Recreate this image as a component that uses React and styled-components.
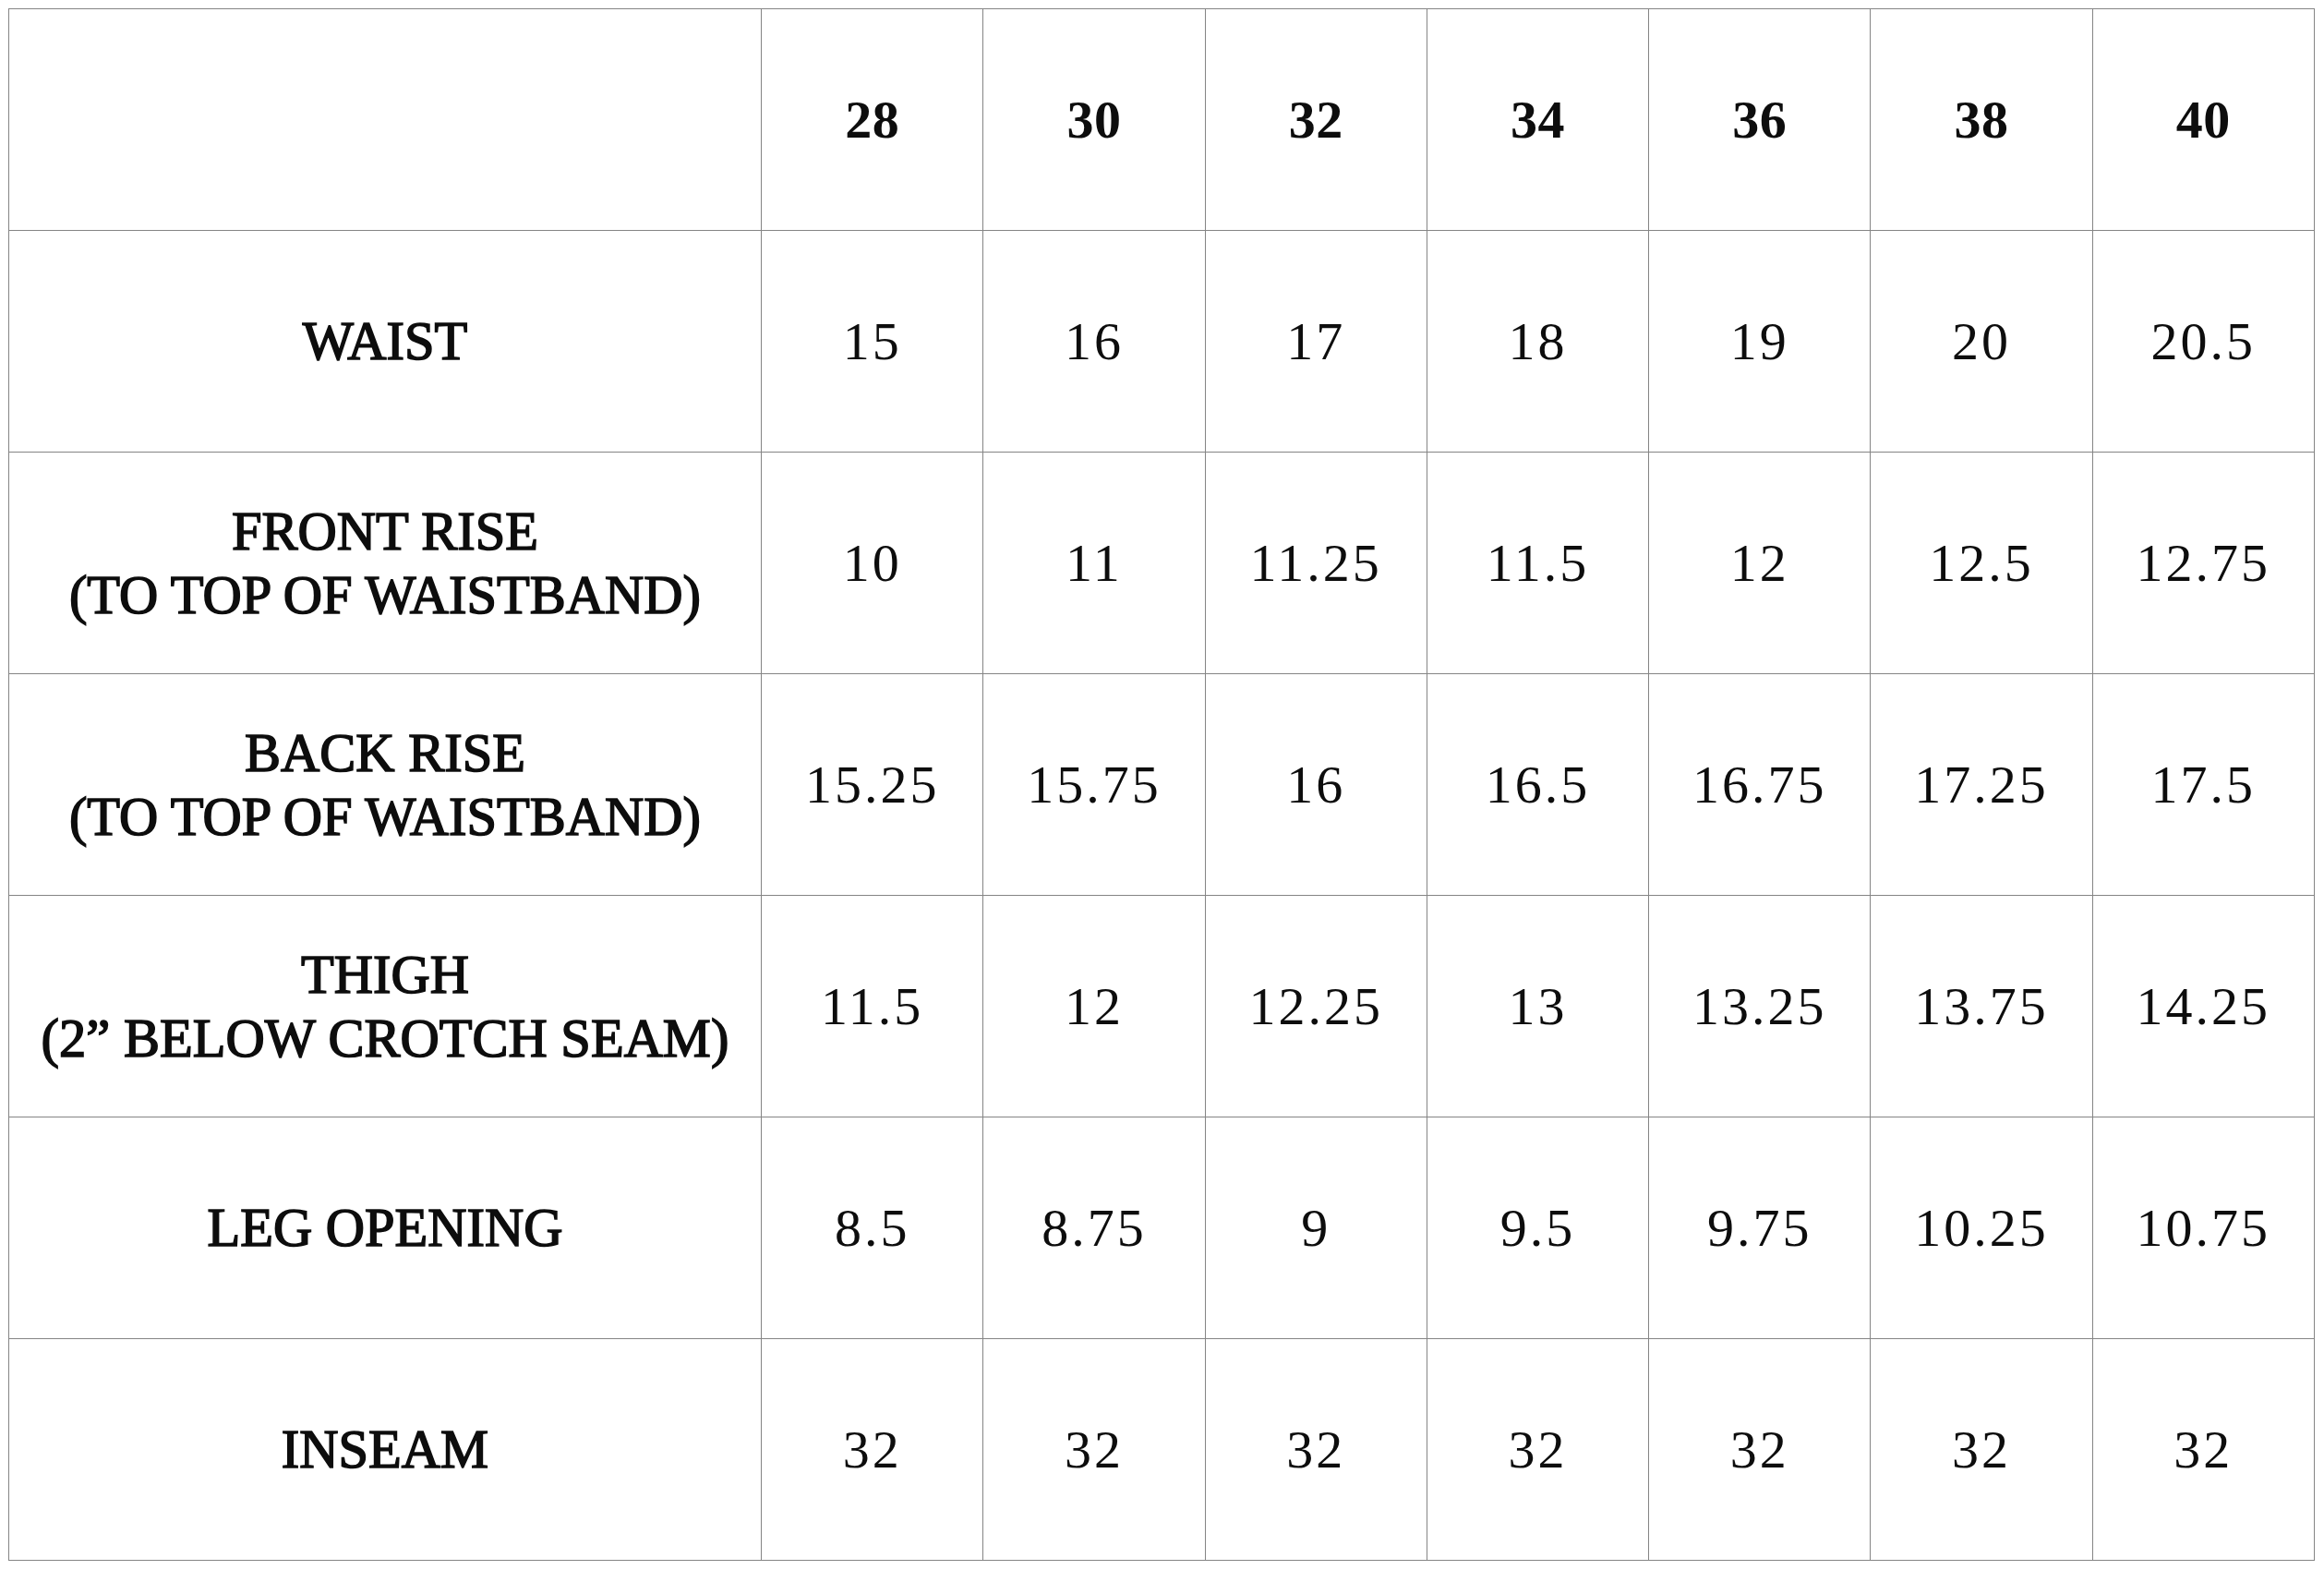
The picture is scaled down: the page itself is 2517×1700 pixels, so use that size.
import React from "react";
import styled, { createGlobalStyle } from "styled-components";

const GlobalStyle = createGlobalStyle`
  html, body {
    margin: 0;
    padding: 0;
    background: #fff;
  }
  body {
    padding: 9px 0 0 9px;
  }
`;

const SIZES = ["28", "30", "32", "34", "36", "38", "40"];

const ROWS = [
  { label: ["WAIST"], values: ["15", "16", "17", "18", "19", "20", "20.5"] },
  {
    label: ["FRONT RISE", "(TO TOP OF WAISTBAND)"],
    values: ["10", "11", "11.25", "11.5", "12", "12.5", "12.75"],
  },
  {
    label: ["BACK RISE", "(TO TOP OF WAISTBAND)"],
    values: ["15.25", "15.75", "16", "16.5", "16.75", "17.25", "17.5"],
  },
  {
    label: ["THIGH", "(2\u201D BELOW CROTCH SEAM)"],
    values: ["11.5", "12", "12.25", "13", "13.25", "13.75", "14.25"],
  },
  {
    label: ["LEG OPENING"],
    values: ["8.5", "8.75", "9", "9.5", "9.75", "10.25", "10.75"],
  },
  { label: ["INSEAM"], values: ["32", "32", "32", "32", "32", "32", "32"] },
];

const Table = styled.table`
  width: 2498px;
  border-collapse: collapse;
  table-layout: fixed;
  font-family: "Liberation Serif", "Times New Roman", serif;
  color: #0d0d0d;
`;

const Row = styled.tr`
  height: 240px;
`;

const Cell = styled.td`
  border: 1px solid #858585;
  padding: 0;
  text-align: center;
  vertical-align: middle;
  font-size: 58px;
  line-height: 69px;
  letter-spacing: ${({ $head }) => ($head ? "0.5px" : "3px")};
  font-weight: ${({ $bold }) => ($bold ? 700 : 400)};
`;

// labels look semibold in the picture, regular face + stroke
const LabelCell = styled(Cell)`
  width: 814px;
  font-size: 58.5px;
  font-weight: 400;
  letter-spacing: 0;
  -webkit-text-stroke: 1.6px currentColor;
`;

const Line = styled.div``;

function App() {
  return (
    <>
      <GlobalStyle />
      <Table>
        <tbody>
          <Row>
            <LabelCell />
            {SIZES.map((s) => (
              <Cell key={s} $bold $head>
                {s}
              </Cell>
            ))}
          </Row>
          {ROWS.map((row) => (
            <Row key={row.label[0]}>
              <LabelCell>
                {row.label.map((l) => (
                  <Line key={l}>{l}</Line>
                ))}
              </LabelCell>
              {row.values.map((v, i) => (
                <Cell key={i}>{v}</Cell>
              ))}
            </Row>
          ))}
        </tbody>
      </Table>
    </>
  );
}

export default App;
